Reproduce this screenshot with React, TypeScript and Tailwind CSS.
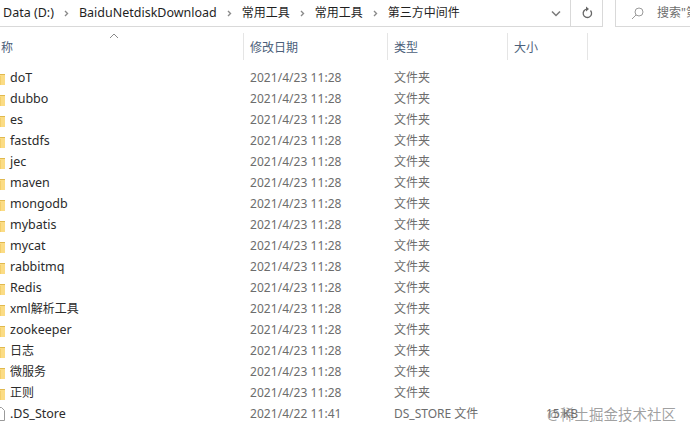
const FONT = "font-['Noto_Sans','Noto_Sans_CJK_SC',sans-serif]";

const crumbs = ["BaiduNetdiskDownload", "常用工具", "常用工具", "第三方中间件"];

const rows = [
  "doT",
  "dubbo",
  "es",
  "fastdfs",
  "jec",
  "maven",
  "mongodb",
  "mybatis",
  "mycat",
  "rabbitmq",
  "Redis",
  "xml解析工具",
  "zookeeper",
  "日志",
  "微服务",
  "正则",
];

function Chevron() {
  return (
    <svg width="5" height="7" viewBox="0 0 5 7" className="shrink-0 mx-[10px]">
      <path d="M1 1l2.5 2.5L1 6" fill="none" stroke="#8a8a8a" strokeWidth="1.4" />
    </svg>
  );
}

function FolderIcon() {
  return (
    <svg width="16" height="14" viewBox="0 0 16 14" className="shrink-0 -ml-[16px]">
      <path d="M0 1h6l2 2h8v11H0z" fill="#e0b94f" />
      <path d="M0 4h16v10H0z" fill="#fbdc85" />
      <path d="M11 5h1v9h-1z" fill="#f4cf6b" />
    </svg>
  );
}

function FileIcon() {
  return (
    <svg width="10" height="14" viewBox="0 0 10 14" className="shrink-0 -ml-[10px]">
      <path d="M0.5 0.5h6l3 3v10h-9z" fill="#fff" stroke="#9a9a9a" />
    </svg>
  );
}

function Row({ name, date, type, size, icon }: { name: string; date: string; type: string; size?: string; icon: React.ReactNode }) {
  // 中文名称 12px, 英文名称 12.5px
  const isLatin = /^[\x00-\x7f]+$/.test(name);
  return (
    <div className="flex items-center h-[21px] text-[12px] leading-[21px]">
      <div className={`w-[250px] flex items-center gap-[5px] pl-[5px] text-[#2b2b2b] overflow-hidden ${isLatin ? "text-[12.5px]" : "text-[12px]"}`}>
        {icon}
        <span>{name}</span>
      </div>
      <div className="w-[144px] text-[#6d6d6d] tracking-[0.05px]">{date}</div>
      <div className="w-[120px] text-[#6d6d6d]">{type}</div>
      <div className="w-[64px] text-right text-[#6d6d6d]">{size}</div>
    </div>
  );
}

export default function App() {
  return (
    <div className={`relative w-[690px] h-[438px] overflow-hidden bg-white ${FONT}`}>
      {/* address bar */}
      <div className="flex h-[27px]">
        <div className="w-[603px] flex items-center border-b border-r border-[#d9d9d9] text-[12.5px] text-[#1f1f1f]">
          <div className="flex-1 flex items-center pl-[3px]">
            <span>Data (D:)</span>
            <Chevron />
            <span>{crumbs[0]}</span>
            <Chevron />
            <span className="text-[12px]">{crumbs[1]}</span>
            <Chevron />
            <span className="text-[12px]">{crumbs[2]}</span>
            <Chevron />
            <span className="text-[12px]">{crumbs[3]}</span>
          </div>
          <svg width="10" height="7" viewBox="0 0 10 7" className="mr-[9px]">
            <path d="M1 1.5l4 4 4-4" fill="none" stroke="#7a7a7a" strokeWidth="1.5" />
          </svg>
          <div className="w-[32px] h-full border-l border-[#d9d9d9] flex items-center justify-center">
            <svg width="12" height="14" viewBox="0 0 12 14">
              <path d="M9.5 4.5a4.2 4.2 0 1 1-3.2-1.4" fill="none" stroke="#666" strokeWidth="1.3" />
              <path d="M5 0.5l3 2.5-3 2.5z" fill="#666" />
            </svg>
          </div>
        </div>
        <div className="ml-[12px] flex-1 flex items-center gap-[13px] pl-[15px] border-l border-b border-[#d9d9d9] text-[12px] text-[#6d6d6d] whitespace-nowrap overflow-hidden">
          <svg width="13" height="13" viewBox="0 0 13 13" className="shrink-0">
            <circle cx="8" cy="5" r="4" fill="none" stroke="#9a9a9a" />
            <path d="M5 8l-4 4" stroke="#9a9a9a" />
          </svg>
          <span>搜索"第</span>
        </div>
      </div>

      {/* column headers */}
      <div className="flex h-[27px] mt-[6px] text-[12px] text-[#4c607a] leading-[29px]">
        <div className="relative w-[244px] pl-px border-r border-[#e5e5e5]">
          称
          <svg width="10" height="6" viewBox="0 0 10 6" className="absolute left-[109px] top-[0px]">
            <path d="M1 5l4-4 4 4" fill="none" stroke="#8a8a8a" />
          </svg>
        </div>
        <div className="w-[144px] pl-[6px] border-r border-[#e5e5e5]">修改日期</div>
        <div className="w-[120px] pl-[6px] border-r border-[#e5e5e5]">类型</div>
        <div className="w-[80px] pl-[6px] border-r border-[#e5e5e5]">大小</div>
      </div>

      {/* file list */}
      <div className="mt-[7px]">
        {rows.map((name) => (
          <Row key={name} name={name} date="2021/4/23 11:28" type="文件夹" icon={<FolderIcon />} />
        ))}
        <Row name=".DS_Store" date="2021/4/22 11:41" type="DS_STORE 文件" size="15 KB" icon={<FileIcon />} />
      </div>

      {/* watermark */}
      <div className="absolute left-[547px] top-[404px] text-[14.5px] leading-[20px] text-[#777]/70 whitespace-nowrap">
        @稀土掘金技术社区
      </div>
    </div>
  );
}
